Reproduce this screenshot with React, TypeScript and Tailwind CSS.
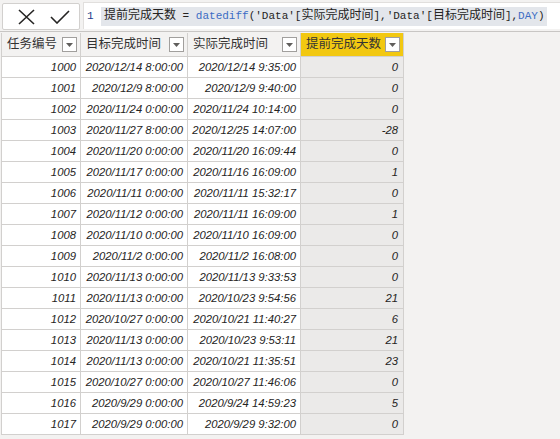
const rows: [string, string, string, string][] = [
  ["1000", "2020/12/14 8:00:00", "2020/12/14 9:35:00", "0"],
  ["1001", "2020/12/9 8:00:00", "2020/12/9 9:40:00", "0"],
  ["1002", "2020/11/24 0:00:00", "2020/11/24 10:14:00", "0"],
  ["1003", "2020/11/27 8:00:00", "2020/12/25 14:07:00", "-28"],
  ["1004", "2020/11/20 0:00:00", "2020/11/20 16:09:44", "0"],
  ["1005", "2020/11/17 0:00:00", "2020/11/16 16:09:00", "1"],
  ["1006", "2020/11/11 0:00:00", "2020/11/11 15:32:17", "0"],
  ["1007", "2020/11/12 0:00:00", "2020/11/11 16:09:00", "1"],
  ["1008", "2020/11/10 0:00:00", "2020/11/10 16:09:00", "0"],
  ["1009", "2020/11/2 0:00:00", "2020/11/2 16:08:00", "0"],
  ["1010", "2020/11/13 0:00:00", "2020/11/13 9:33:53", "0"],
  ["1011", "2020/11/13 0:00:00", "2020/10/23 9:54:56", "21"],
  ["1012", "2020/10/27 0:00:00", "2020/10/21 11:40:27", "6"],
  ["1013", "2020/11/13 0:00:00", "2020/10/23 9:53:11", "21"],
  ["1014", "2020/11/13 0:00:00", "2020/10/21 11:35:51", "23"],
  ["1015", "2020/10/27 0:00:00", "2020/10/27 11:46:06", "0"],
  ["1016", "2020/9/29 0:00:00", "2020/9/24 14:59:23", "5"],
  ["1017", "2020/9/29 0:00:00", "2020/9/29 9:32:00", "0"],
];

const headers = ["任务编号", "目标完成时间", "实际完成时间", "提前完成天数"];

function FilterBox() {
  return (
    <div className="flex h-[15px] w-[15px] shrink-0 items-center justify-center border border-[#a19f9d] bg-white">
      <svg width="7" height="4" viewBox="0 0 7 4">
        <path d="M0 0h7L3.5 4z" fill="#605e5c" />
      </svg>
    </div>
  );
}

// CJK runs in the formula are wider than the mono ASCII
function Cjk({ children }: { children: string }) {
  return <span className="text-[12px]">{children}</span>;
}

export default function App() {
  return (
    <div
      className="h-[439px] w-[560px] overflow-hidden bg-[#f3f2f1] text-[#252423]"
      style={{ fontFamily: '"Liberation Sans", "Noto Sans CJK SC", sans-serif' }}
    >
      {/* formula bar */}
      <div className="flex h-[32px] border-b border-[#c8c6c4]">
        <div className="ml-[2px] mt-[3px] flex h-[27px] w-[78px] items-center rounded-[2px] border border-[#d2d0ce] bg-white">
          <svg width="18" height="16" viewBox="0 0 18 16" className="ml-[15px]">
            <path d="M1 1l15 14M16 1L1 15" stroke="#252423" strokeWidth="1.6" fill="none" />
          </svg>
          <svg width="20" height="14" viewBox="0 0 20 14" className="ml-[14px]">
            <path d="M1 7l6 6L19 1" stroke="#252423" strokeWidth="1.6" fill="none" />
          </svg>
        </div>
        <div className="ml-[3px] mt-[2px] flex h-[27px] flex-1 items-center border-l border-t border-[#e1dfdd] bg-white font-['Liberation_Mono','Noto_Sans_CJK_SC',monospace] text-[11px]">
          <span className="ml-[3px] w-[14px] text-[#1e3a8a]">1</span>
          <span className="flex h-[19px] items-center bg-[#e3e6eb] pl-[3px] pr-[2px] whitespace-pre text-[#252423]">
            <Cjk>提前完成天数</Cjk> = <span className="text-[#3b6cc4]">datediff</span>('Data'[<Cjk>实际完成时间</Cjk>],'Data'[<Cjk>目标完成时间</Cjk>],
            <span className="text-[#3b6cc4]">DAY</span>)
          </span>
        </div>
      </div>

      {/* table */}
      <div className="ml-px mt-px w-[403px] border-l border-[#d2d0ce]">
        <div className="grid h-[24px] grid-cols-[79px_107px_113px_103px] border-b border-[#d2d0ce] text-[12.5px] text-[#333]">
          {headers.map((h, i) => (
            <div
              key={h}
              className={`flex items-center justify-between border-r border-[#d2d0ce] pl-[5px] pr-[3px] ${
                i === 3 ? "bg-[#f2c811]" : "bg-[#f3f2f1]"
              }`}
            >
              <span>{h}</span>
              <FilterBox />
            </div>
          ))}
        </div>
        {rows.map((r) => (
          <div
            key={r[0]}
            className="grid h-[21px] grid-cols-[79px_107px_113px_103px] border-b border-[#d2d0ce] text-[11.3px] italic"
          >
            {r.map((c, i) => (
              <div
                key={i}
                className={`flex items-center justify-end border-r border-[#d2d0ce] pr-[4px] ${
                  i === 3 ? "bg-[#ebeae9] pr-[5px]" : "bg-white"
                }`}
              >
                {c}
              </div>
            ))}
          </div>
        ))}
      </div>
    </div>
  );
}
